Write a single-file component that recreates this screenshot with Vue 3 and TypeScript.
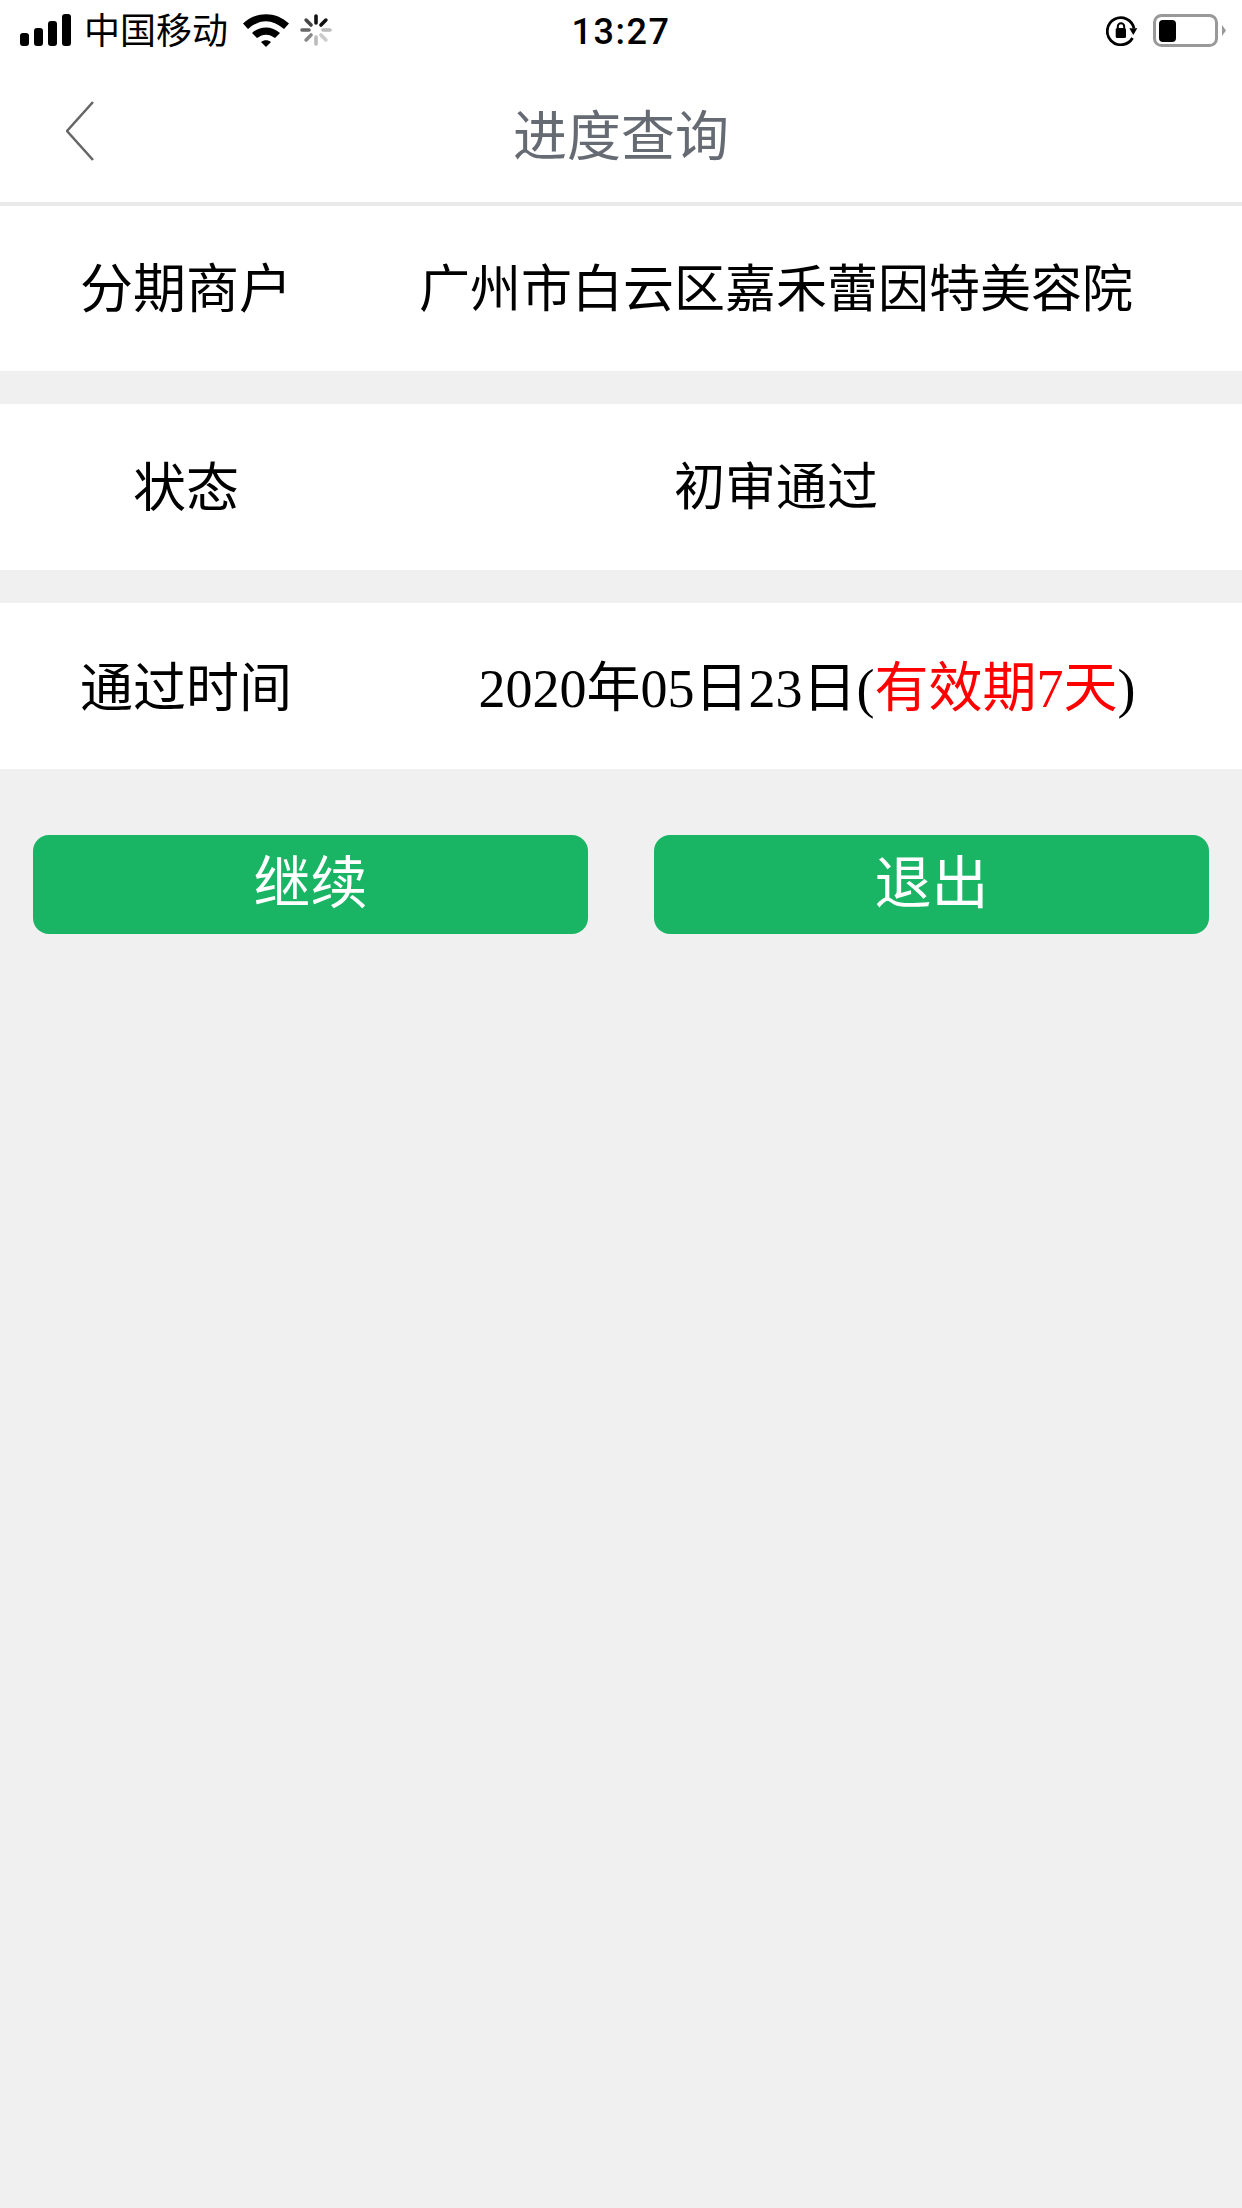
<script setup lang="ts">
const spokes: { angle: number; color: string }[] = [
  { angle: 0, color: '#111' },
  { angle: 45, color: '#111' },
  { angle: 90, color: '#bbb' },
  { angle: 135, color: '#ccc' },
  { angle: 180, color: '#bbb' },
  { angle: 225, color: '#888' },
  { angle: 270, color: '#666' },
  { angle: 315, color: '#444' },
]
const rows: { label: string; value?: string }[] = [
  { label: '分期商户', value: '广州市白云区嘉禾蕾因特美容院' },
  { label: '状态', value: '初审通过' },
  { label: '通过时间' },
]
</script>

<template>
  <div class="page">
    <header class="status">
      <div class="status-left">
        <svg width="51" height="32" viewBox="0 0 51 32">
          <rect x="0" y="19" width="9" height="13" rx="3" />
          <rect x="14" y="14" width="9" height="18" rx="3" />
          <rect x="28" y="7" width="9" height="25" rx="3" />
          <rect x="42" y="0" width="9" height="32" rx="3" />
        </svg>
        <span class="carrier">中国移动</span>
        <svg class="wifi" width="46" height="33" viewBox="0 0 46 33">
          <path d="M0 9.5C13-3 33-3 46 9.5L41 15C29 4.5 17 4.5 5 15Z" />
          <path d="M9 19C17 11.5 29 11.5 37 19L32 24C26 19.5 20 19.5 14 24Z" />
          <path d="M18 28C21 25.5 25 25.5 28 28L23 33Z" />
        </svg>
        <svg class="spinner" width="32" height="32" viewBox="0 0 32 32">
          <line
            v-for="s in spokes"
            :key="s.angle"
            x1="16"
            y1="2"
            x2="16"
            y2="9"
            :stroke="s.color"
            stroke-width="3.6"
            stroke-linecap="round"
            :transform="`rotate(${s.angle} 16 16)`"
          />
        </svg>
      </div>
      <div class="time">13:27</div>
      <div class="status-right">
        <svg width="34" height="32" viewBox="0 0 34 32">
          <path d="M26.5 24A13.5 13.5 0 1 1 28 14.5" fill="none" stroke="#000" stroke-width="2.8" />
          <path d="M23.3 14.3H31.3L27.3 21Z" />
          <rect x="9.7" y="14" width="10.3" height="10" rx="1.5" />
          <path d="M11.8 14V12.5A3.2 3.2 0 0 1 18.2 12.5V14" fill="none" stroke="#000" stroke-width="2" />
        </svg>
        <svg class="battery" width="73" height="33" viewBox="0 0 73 33">
          <rect x="1.5" y="1.5" width="62" height="30" rx="7" fill="none" stroke="#999" stroke-width="3" />
          <rect x="6" y="6" width="17" height="22" rx="4" fill="#000" />
          <path d="M69 11L73 16.5L69 22Z" fill="#999" />
        </svg>
      </div>
    </header>

    <nav class="nav">
      <svg class="back" width="28" height="60" viewBox="0 0 28 60">
        <path d="M27 1L1 30L27 59" fill="none" stroke="#666" stroke-width="2.6" />
      </svg>
      <h1 class="title">进度查询</h1>
      <span></span>
    </nav>

    <section>
      <div v-for="row in rows" :key="row.label" class="row">
        <div class="label">{{ row.label }}</div>
        <div v-if="row.value" class="value">{{ row.value }}</div>
        <div v-else class="value value-date">2020年05日23日(<span class="red">有效期7天</span>)</div>
      </div>
    </section>

    <div class="actions">
      <button class="btn" type="button">继续</button>
      <button class="btn" type="button">退出</button>
    </div>
  </div>
</template>

<style>
html,
body {
  margin: 0;
  background: #f0f0f0;
}
</style>

<style scoped>
.page {
  width: 1242px;
  min-height: 2208px;
  background: #f0f0f0;
  font-family: "Liberation Serif", "Noto Sans CJK SC", serif;
  color: #000;
}
.status {
  display: grid;
  grid-template-columns: 1fr auto 1fr;
  align-items: center;
  box-sizing: border-box;
  height: 62px;
  padding-bottom: 2px;
  background: #fff;
  font-family: Roboto, "Noto Sans CJK SC", sans-serif;
}
.status-left {
  display: flex;
  align-items: center;
  padding-left: 20px;
}
.carrier {
  margin: 4px 0 0 13px;
  font-size: 36px;
  line-height: 40px;
}
.wifi {
  margin-left: 15px;
}
.spinner {
  margin-left: 11px;
}
.time {
  margin-top: 4px;
  font-size: 36px;
  font-weight: 500;
  letter-spacing: 1.5px;
}
.status-right {
  display: flex;
  align-items: center;
  justify-content: flex-end;
  padding-right: 16px;
}
.battery {
  margin-left: 13px;
}
.nav {
  display: grid;
  grid-template-columns: 1fr auto 1fr;
  align-items: center;
  box-sizing: border-box;
  height: 144px;
  padding: 0 66px;
  background: #fff;
  border-bottom: 4px solid #e9e9e9;
}
.back {
  margin-bottom: 2px;
}
.title {
  margin: 2px 0 0;
  font-family: "Noto Sans CJK SC", sans-serif;
  font-size: 54px;
  font-weight: 400;
  line-height: 70px;
  color: #666b73;
}
.row {
  display: flex;
  align-items: center;
  height: 166px;
  margin-bottom: 33px;
  background: #fff;
}
.row:first-child {
  height: 165px;
}
.label {
  flex: none;
  width: 372px;
  margin-right: -62px;
  padding-bottom: 7px;
  font-size: 53px;
  text-align: center;
}
.row:last-child .label {
  padding-bottom: 5px;
}
.value {
  flex: 1;
  padding-bottom: 8px;
  font-size: 51px;
  text-align: center;
  white-space: nowrap;
}
.value-date {
  padding-bottom: 6px;
  padding-left: 62px;
  font-size: 54px;
}
.red {
  color: #f00;
}
.actions {
  display: flex;
  gap: 66px;
  padding: 33px 33px 0;
}
.btn {
  flex: 1;
  height: 99px;
  padding: 0 0 14px;
  border: 0;
  border-radius: 16px;
  background: #19b565;
  color: #fff;
  font-family: "Noto Sans CJK SC", sans-serif;
  font-size: 57px;
  line-height: 70px;
}
</style>
